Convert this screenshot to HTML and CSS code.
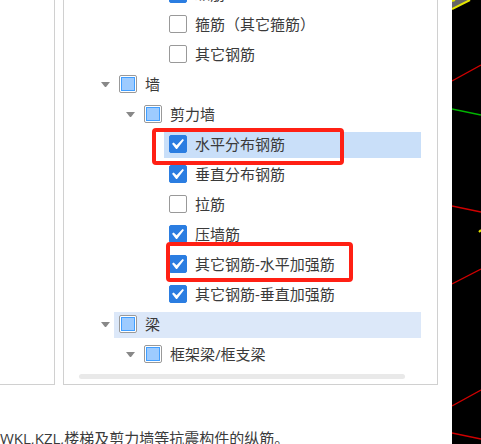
FILE: index.html
```html
<!DOCTYPE html>
<html lang="zh-CN">
<head>
    <meta charset="UTF-8">
    <meta name="viewport" content="width=device-width, initial-scale=1.0">
    <title>钢筋设置</title>
    <link rel="stylesheet" href="styles.css">
</head>
<body>
    <main class="dialog">
        <div class="panels">
            <div class="side-panel"></div>
            <div class="tree-panel">
                <ul class="tree">
                    <li class="level-3"><label class="node"><input type="checkbox" checked>纵筋</label></li>
                    <li class="level-3"><label class="node"><input type="checkbox">箍筋（其它箍筋）</label></li>
                    <li class="level-3"><label class="node"><input type="checkbox">其它钢筋</label></li>
                    <li class="level-1">
                        <button class="toggle" aria-label="收起"></button>
                        <label class="node"><input type="checkbox" class="partial">墙</label>
                    </li>
                    <li class="level-2">
                        <button class="toggle" aria-label="收起"></button>
                        <label class="node"><input type="checkbox" class="partial">剪力墙</label>
                    </li>
                    <li class="level-3">
                        <label class="node selected"><input type="checkbox" checked>水平分布钢筋</label>
                        <span class="mark mark-first"></span>
                    </li>
                    <li class="level-3"><label class="node"><input type="checkbox" checked>垂直分布钢筋</label></li>
                    <li class="level-3"><label class="node"><input type="checkbox">拉筋</label></li>
                    <li class="level-3"><label class="node"><input type="checkbox" checked>压墙筋</label></li>
                    <li class="level-3">
                        <label class="node"><input type="checkbox" checked>其它钢筋-水平加强筋</label>
                        <span class="mark mark-second"></span>
                    </li>
                    <li class="level-3"><label class="node"><input type="checkbox" checked>其它钢筋-垂直加强筋</label></li>
                    <li class="level-1">
                        <button class="toggle" aria-label="收起"></button>
                        <label class="node hovered"><input type="checkbox" class="partial">梁</label>
                    </li>
                    <li class="level-2">
                        <button class="toggle" aria-label="收起"></button>
                        <label class="node"><input type="checkbox" class="partial">框架梁/框支梁</label>
                    </li>
                </ul>
                <div class="scrollbar"></div>
            </div>
        </div>
        <p class="note">WKL,KZL,楼梯及剪力墙等抗震构件的纵筋。</p>
    </main>

    <!-- Model view -->
    <aside class="viewport">
        <svg width="29" height="444" viewBox="0 0 29 444" fill="none">
            <path d="M0 0H18L0 9Z" fill="#666"/>
            <path d="M0 9L18 0M0 1L3 0" stroke="#e6e600" stroke-width="2"/>
            <path d="M0 81L29 65M0 206L29 212M0 284L29 269M0 406L29 390M0 433L29 439" stroke="#d00000" stroke-width="1.3"/>
            <path d="M0 109L29 115" stroke="#00b400" stroke-width="1.5"/>
            <path d="M27 232L29 230" stroke="#e6e600" stroke-width="2"/>
        </svg>
    </aside>
</body>
</html>
```

FILE: styles.css
```css
* {
    box-sizing: border-box;
}
body {
    display: flex;
    height: 100vh;
    margin: 0;
    overflow: hidden;
    background-color: #fff;
    color: #3a3a3a;
    font-family: "Open Sans", "Noto Sans CJK SC", sans-serif;
    font-size: 15px;
    line-height: 24px;
}
.dialog {
    flex: 1;
    min-width: 0;
}
.panels {
    display: flex;
    gap: 8px;
    padding-right: 14px;
}
.side-panel {
    flex: 0 0 55px;
    border: solid #d0d0d0;
    border-width: 0 1px 1px 0;
}
.tree-panel {
    flex: 1;
    min-width: 0;
    padding: 0 16px 5px 15px;
    border: solid #d0d0d0;
    border-width: 0 1px 1px 1px;
}
.tree {
    list-style: none;
    margin: -20px 0 0;
    padding: 0;
}
.tree li {
    display: flex;
    align-items: center;
    position: relative;
    height: 30px;
}
.level-1 {
    padding-left: 19px;
}
.level-2 {
    padding-left: 44px;
}
.tree .level-3 {
    padding-left: 85px;
}
.node {
    display: flex;
    align-items: center;
    flex: 1;
    gap: 8px;
    height: 26px;
    padding: 0 0 2px 5px;
    white-space: nowrap;
}
.selected {
    background-color: #c9dff9;
}
.hovered {
    background-color: #dce8f9;
}
.toggle {
    width: 16px;
    height: 26px;
    padding: 0 4px 2px 3px;
    border: none;
    background: none;
}
.toggle::before {
    content: "";
    display: block;
    border: solid transparent;
    border-width: 5px 4px 0;
    border-top-color: #888;
}
input {
    appearance: none;
    flex: none;
    display: grid;
    place-items: center;
    width: 18px;
    height: 18px;
    margin: 0;
    border: 1px solid #999;
    border-radius: 2px;
    background-color: #fff;
}
input:checked {
    border-color: #2b7de1;
    background-color: #2b7de1;
}
input:checked::before {
    content: "";
    width: 12px;
    height: 10px;
    background-color: #fff;
    clip-path: polygon(0 48%, 14% 36%, 38% 62%, 88% 0, 100% 10%, 42% 100%, 34% 100%);
}
.partial::before {
    content: "";
    width: 12px;
    height: 12px;
    border: 1px solid #409eff;
    background-color: #9dcbff;
}
/* Red highlight frames */
.mark {
    position: absolute;
    z-index: 1;
    border: 4px solid #ff2014;
    border-radius: 4px;
    pointer-events: none;
}
.mark-first {
    left: 73px;
    top: -2px;
    width: 192px;
    height: 37px;
}
.mark-second {
    left: 87px;
    top: -8px;
    width: 187px;
    height: 40px;
}
.scrollbar {
    height: 5px;
    margin: 4px 16px 0 0;
    border-radius: 3px;
    background-color: #e9e9e9;
}
.note {
    margin: 41px 0 0;
    white-space: nowrap;
}
.viewport {
    flex: 0 0 29px;
    background-color: #000;
}
.viewport svg {
    display: block;
}
```
